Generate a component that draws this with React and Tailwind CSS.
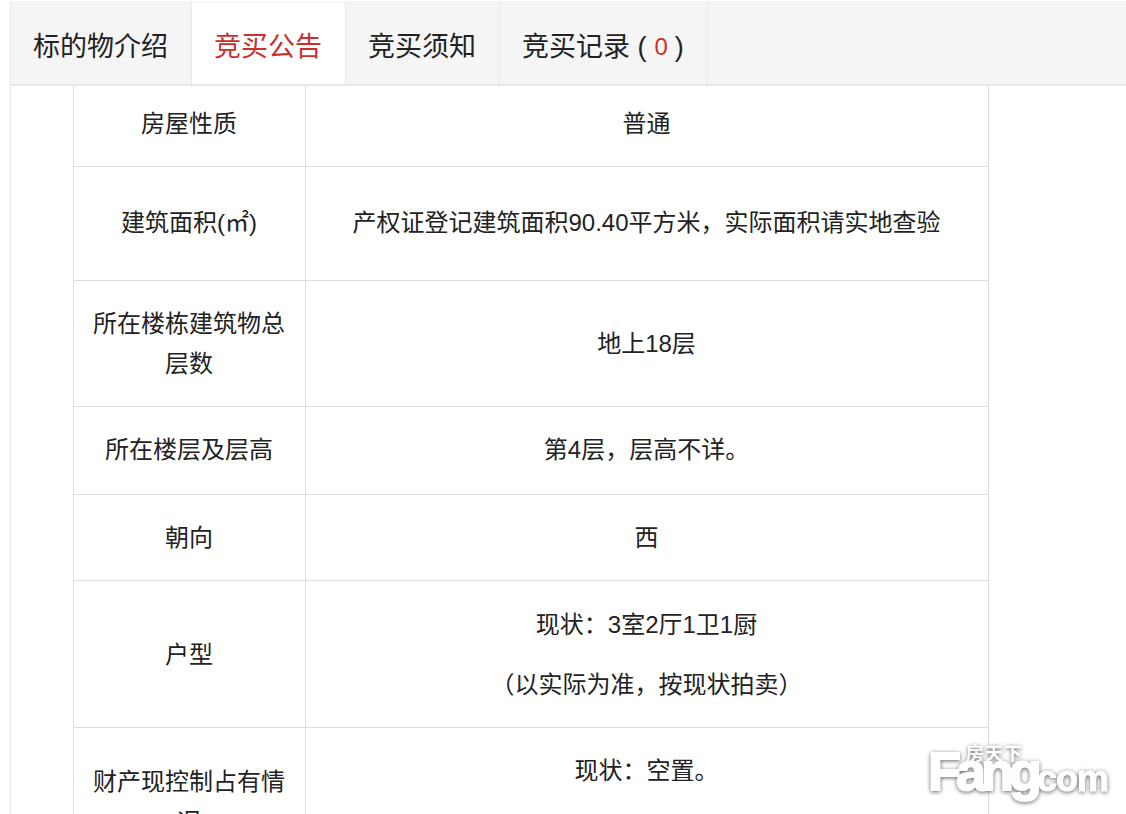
const rows = [
  { label: ['房屋性质'], value: ['普通'], h: 'h-[80px]', pad: 'pb-[4px] border-t-0' },
  { label: ['建筑面积(㎡)'], value: ['产权证登记建筑面积90.40平方米，实际面积请实地查验'], h: 'h-[114px]', pad: 'pb-0' },
  { label: ['所在楼栋建筑物总', '层数'], value: ['地上18层'], h: 'h-[126px]', pad: 'pt-[2px]' },
  { label: ['所在楼层及层高'], value: ['第4层，层高不详。'], h: 'h-[88px]', pad: 'pb-[1px]' },
  { label: ['朝向'], value: ['西'], h: 'h-[86px]', pad: 'pt-[1px]' },
  { label: ['户型'], value: ['现状：3室2厅1卫1厨', '（以实际为准，按现状拍卖）'], h: 'h-[147px]', pad: 'pt-[3px]' },
];

function Tab({ children, active }) {
  return (
    <div
      className={`flex h-full items-center border-r border-[#e8e8e8] pb-0 pl-[22px] pr-[23px] pt-[7px] text-[27px] ${
        active ? 'bg-white text-[#c9302c]' : 'text-[#222]'
      }`}
    >
      {children}
    </div>
  );
}

function Cell({ lines, gap, className }) {
  return (
    <td className={`border border-[#ddd] pl-[16px] pr-[17px] text-center align-middle text-[24px] leading-[40px] ${className}`}>
      {lines.map((line, i) => (
        <div key={line} className={i > 0 && gap ? 'mt-[20px]' : ''}>
          {line}
        </div>
      ))}
    </td>
  );
}

export default function App() {
  return (
    <div className="relative h-[814px] w-[1126px] overflow-hidden bg-white font-['Liberation_Sans','Noto_Sans_CJK_SC',sans-serif] text-[#222]">
      <div className="ml-[10px] h-full border-l border-[#e8e8e8]">
        <div className="mt-[1px] h-[85px] border-b-[2px] border-[#e8e8e8] bg-[#f5f5f5] pt-[2px]">
          <div className="flex h-full">
            <Tab>标的物介绍</Tab>
            <Tab active>竞买公告</Tab>
            <Tab>竞买须知</Tab>
            <Tab>
              竞买记录 ( <span className="ml-[8px] mr-[7px] text-[24px] text-[#c9302c]">0</span> )
            </Tab>
          </div>
        </div>

        <table className="ml-[62px] w-[916px] table-fixed border-collapse">
          <colgroup>
            <col className="w-[232px]" />
            <col />
          </colgroup>
          <tbody>
            {rows.map((r) => (
              <tr key={r.label[0]} className={r.h}>
                <Cell lines={r.label} className={r.pad} />
                <Cell lines={r.value} gap className={r.pad} />
              </tr>
            ))}
            <tr>
              <Cell lines={['财产现控制占有情', '况']} className="pt-[34px] align-top" />
              <Cell lines={['现状：空置。']} className="pt-[23px] align-top" />
            </tr>
          </tbody>
        </table>
      </div>

      {/* 水印 */}
      <div className="absolute left-[928px] top-[745px] h-[60px] w-[180px] select-none font-bold text-white drop-shadow-[0_1px_2px_#666]">
        <div className="absolute left-[38px] top-[0px] text-[18px] leading-none tracking-[1px]">房天下</div>
        <div className="absolute left-0 top-[-6px] whitespace-nowrap text-[54px] leading-[64px] tracking-[-5px] [-webkit-text-stroke:2px_white]">
          Fang
        </div>
        <div className="absolute left-[100px] top-[12px] whitespace-nowrap text-[36px] leading-[44px] tracking-[-1px] [-webkit-text-stroke:1px_white]">
          .com
        </div>
      </div>
    </div>
  );
}
